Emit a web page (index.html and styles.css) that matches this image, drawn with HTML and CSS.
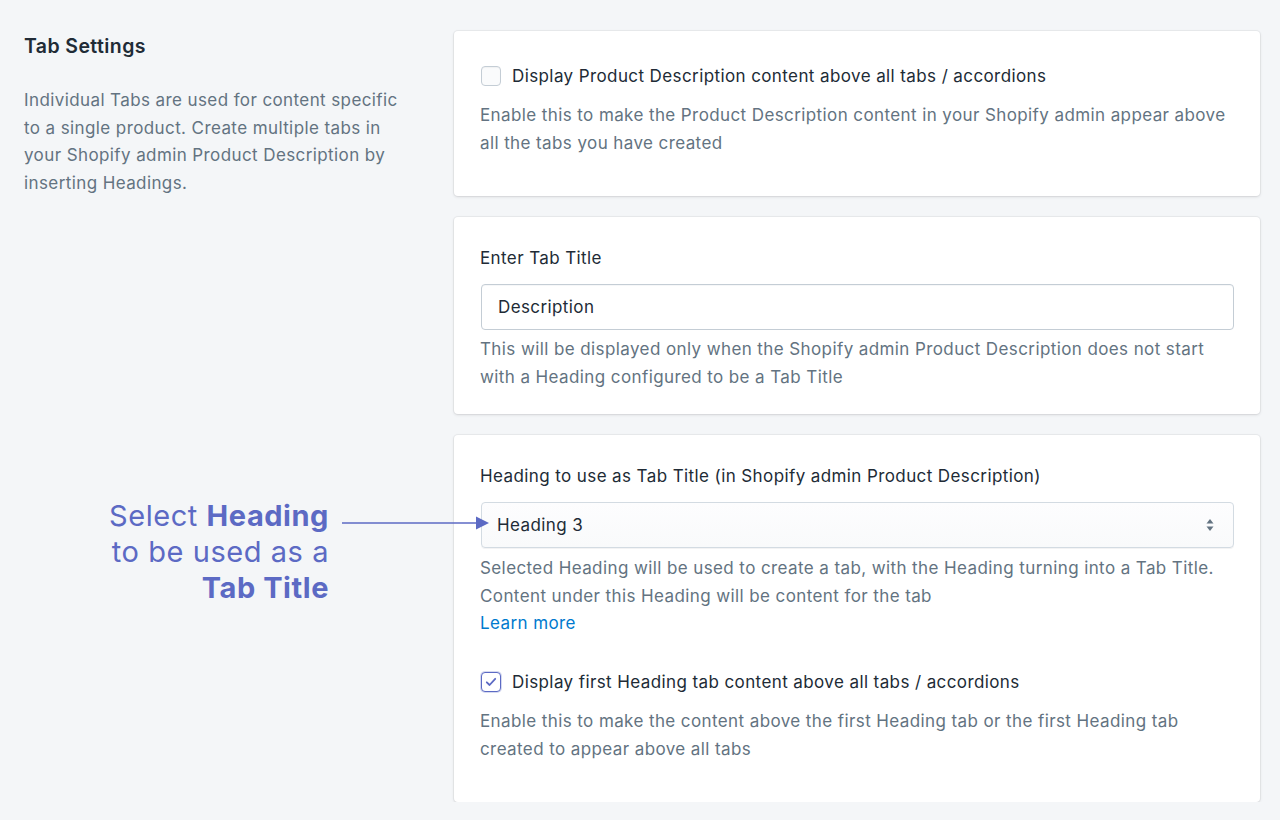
FILE: index.html
```html
<!DOCTYPE html>
<html lang="en">
<head>
<meta charset="utf-8">
<title>Tab Settings</title>
<link rel="stylesheet" href="styles.css">
</head>
<body>
<div class="page">
  <aside class="side">
    <h2 class="side-title">Tab Settings</h2>
    <p class="side-text">Individual Tabs are used for content specific to a single product. Create multiple tabs in your Shopify admin Product Description by inserting Headings.</p>
    <div class="note">
      <div class="note-text">Select <b>Heading</b><br>to be used as a<br><b>Tab Title</b></div>
      <svg class="note-arrow" width="150" height="14" viewBox="0 0 150 14">
        <line x1="0" y1="7" x2="136" y2="7" stroke="#5c6ac4" stroke-width="1.6"/>
        <polygon points="134,0.5 147,7 134,13.5" fill="#5c6ac4"/>
      </svg>
    </div>
  </aside>
  <main class="cards">
    <section class="card">
      <label class="check-row">
        <span class="box"></span>
        <span class="check-label">Display Product Description content above all tabs / accordions</span>
      </label>
      <p class="help help-check">Enable this to make the Product Description content in your Shopify admin appear above all the tabs you have created</p>
    </section>
    <section class="card card-tight">
      <div class="field-label">Enter Tab Title</div>
      <div class="input">Description</div>
      <p class="help">This will be displayed only when the Shopify admin Product Description does not start with a Heading configured to be a Tab Title</p>
    </section>
    <section class="card">
      <div class="field-label">Heading to use as Tab Title (in Shopify admin Product Description)</div>
      <div class="select">
        <span>Heading 3</span>
        <svg class="select-arrows" width="10" height="16" viewBox="0 0 10 16">
          <polygon points="5,2 8.5,6.5 1.5,6.5" fill="#637381"/>
          <polygon points="5,14 8.5,9.5 1.5,9.5" fill="#637381"/>
        </svg>
      </div>
      <p class="help help-select">Selected Heading will be used to create a tab, with the Heading turning into a Tab Title. Content under this Heading will be content for the tab</p>
      <a class="link" href="#">Learn more</a>
      <label class="check-row check-row-second">
        <span class="box box-on">
          <svg width="14" height="14" viewBox="0 0 14 14"><path d="M2.8 7.3 L5.6 10 L11.2 3.8" fill="none" stroke="#5c6ac4" stroke-width="1.8" stroke-linecap="round" stroke-linejoin="round"/></svg>
        </span>
        <span class="check-label">Display first Heading tab content above all tabs / accordions</span>
      </label>
      <p class="help help-check">Enable this to make the content above the first Heading tab or the first Heading tab created to appear above all tabs</p>
    </section>
  </main>
</div>
</body>
</html>
```

FILE: styles.css
```css
* { box-sizing: border-box; }
html, body { margin: 0; padding: 0; }
body {
  background: #f4f6f8;
  font-family: Inter, "Noto Sans", "Liberation Sans", sans-serif;
  color: #212b36;
  font-size: 17px;
  letter-spacing: 0.4px;
}
.page {
  display: flex;
  padding: 31px 20px 0 24px;
}
.side {
  width: 430px;
  flex: none;
  position: relative;
}
.side-title {
  margin: 0;
  padding-top: 3px;
  font-size: 19.5px;
  font-weight: 600;
  line-height: 24px;
  color: #212b36;
}
.side-text {
  margin: 29px 0 0;
  width: 395px;
  font-size: 17px;
  line-height: 27.6px;
  color: #637381;
}
.note {
  position: absolute;
  left: 0;
  top: 467px;
  width: 470px;
}
.note-text {
  width: 305px;
  text-align: right;
  color: #5c6ac4;
  font-size: 29px;
  line-height: 36px;
  letter-spacing: 0.55px;
}
.note-text b { font-weight: 700; }
.note-arrow {
  position: absolute;
  left: 318px;
  top: 18px;
}
.cards {
  width: 806px;
  display: flex;
  flex-direction: column;
  gap: 21px;
}
.card {
  background: #fff;
  border-radius: 4px;
  box-shadow: 0 0 0 1px rgba(63,63,68,0.05), 0 1px 3px rgba(63,63,68,0.15);
  padding: 27px 26px 39px;
}
.card-tight { padding-bottom: 23px; }
.check-row {
  display: flex;
  align-items: center;
  gap: 11px;
  height: 28px;
  margin-top: 4px;
}
.check-row-second { margin-top: 31px; }
.box {
  width: 20px;
  height: 20px;
  border: 1px solid #c4cdd5;
  border-radius: 4px;
  background: #fafbfc;
  box-shadow: inset 0 1px 1px rgba(0,0,0,0.04);
  flex: none;
  display: flex;
  align-items: center;
  justify-content: center;
  margin-left: 1px;
}
.box-on {
  border-color: #5c6ac4;
  background: #fff;
  box-shadow: 0 0 0 1px rgba(92,106,196,0.25);
}
.check-label {
  line-height: 28px;
  color: #212b36;
}
.help {
  margin: 6px 0 0;
  line-height: 27.5px;
  color: #637381;
}
.help-check { margin-top: 12px; }
.help-select { margin-top: 7px; }
.field-label {
  line-height: 28px;
  color: #212b36;
}
.input, .select {
  margin-top: 12px;
  height: 46px;
  border: 1px solid #c4cdd5;
  border-radius: 4px;
  display: flex;
  align-items: center;
  margin-left: 1px;
}
.input {
  padding-left: 16px;
  background: #fff;
  box-shadow: inset 0 1px 0 rgba(99,115,129,0.06);
}
.select {
  padding: 0 18px 0 15px;
  justify-content: space-between;
  background: linear-gradient(#fdfdfe, #f9fafb);
  border-color: #d3dbe2;
  box-shadow: 0 1px 0 rgba(22,29,37,0.05);
}
.link {
  display: block;
  line-height: 27px;
  color: #007ace;
  text-decoration: none;
}
```
